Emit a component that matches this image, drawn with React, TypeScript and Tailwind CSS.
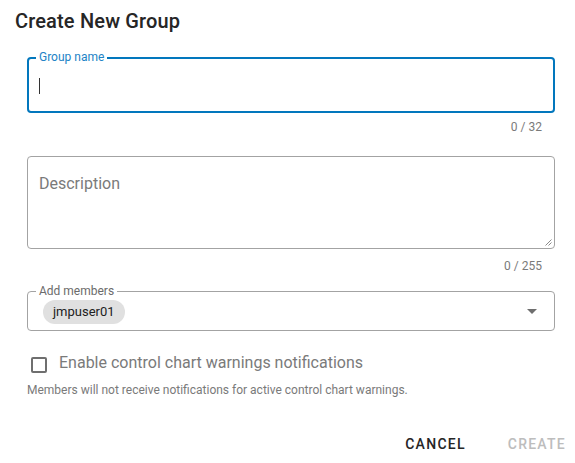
import { useState } from "react";

const medium = "font-['Roboto_Medium',Roboto,sans-serif] font-normal";

// Outlined field label that sits on top of the border line
function NotchLabel({ text, active, className }: { text: string; active?: boolean; className: string }) {
  return (
    <span
      className={`absolute bg-white px-[3px] text-[12px] leading-[16px] ${
        active ? "text-[#2283c6]" : "text-[#6b6b6b]"
      } ${className}`}
    >
      {text}
    </span>
  );
}

function Counter({ value, max, className }: { value: number; max: number; className: string }) {
  return (
    <div className={`flex justify-end pr-[13px] text-[12px] leading-[16px] text-[#7a7a7a] ${className}`}>
      {value} / {max}
    </div>
  );
}

function ResizeGrip() {
  return (
    <svg className="absolute bottom-[2px] right-[2px]" width="8" height="8" viewBox="0 0 8 8">
      <path d="M7.5 1.5 L1.5 7.5 M7.5 4.5 L4.5 7.5" stroke="#8a8a8a" strokeWidth="1" fill="none" />
    </svg>
  );
}

export default function App() {
  const [name] = useState("");
  const [desc] = useState("");
  const [notify, setNotify] = useState(false);

  return (
    <div
      className="flex h-[463px] w-[575px] flex-col bg-white text-[#212121]"
      style={{ fontFamily: "Roboto, 'Noto Sans', sans-serif" }}
    >
      <h2 className={`pl-[15px] pt-[7px] text-[20px] leading-[28px] tracking-[0.15px] text-[#262626] ${medium}`}>
        Create New Group
      </h2>

      <div className="ml-[27px] mr-[20px] flex flex-col">
        {/* group name, focused */}
        <div className="relative mt-[22px] flex h-[56px] items-center rounded-[4px] border-2 border-[#0277bd] pl-[10px]">
          <NotchLabel text="Group name" active className="-top-[10px] left-[7px]" />
          <span className="mt-[1px] h-[16px] w-px bg-[#333]" />
          <span className="sr-only">{name}</span>
        </div>
        <Counter value={name.length} max={32} className="mt-[6px]" />

        {/* description */}
        <div className="relative mt-[21px] h-[93px] rounded-[4px] border border-[#a3a3a3] pl-[11px] pt-[15px]">
          <span className="text-[16px] leading-[24px] text-[#7a7a7a]">{desc || "Description"}</span>
          <ResizeGrip />
        </div>
        <Counter value={desc.length} max={255} className="mt-[9px]" />

        {/* members select */}
        <div className="relative mt-[17px] flex h-[40px] items-center justify-between rounded-[4px] border border-[#a3a3a3] pl-[15px] pr-[17px]">
          <NotchLabel text="Add members" className="-top-[9px] left-[8px]" />
          <span className="mt-[2px] flex h-[24px] items-center rounded-full bg-[#e0e0e0] px-[10px] text-[13px] text-[#212121]">
            jmpuser01
          </span>
          <svg width="10" height="5" viewBox="0 0 10 5" className="mt-[1px]">
            <path d="M0 0 L10 0 L5 5 Z" fill="#6e6e6e" />
          </svg>
        </div>
      </div>

      {/* notifications toggle */}
      <label className="ml-[31px] mt-[20px] flex cursor-pointer items-start gap-[12px]">
        <span
          onClick={() => setNotify(!notify)}
          className={`mt-[6px] h-[16px] w-[16px] rounded-[2px] border-2 ${
            notify ? "border-[#0277bd] bg-[#0277bd]" : "border-[#6f6f6f]"
          }`}
        />
        <span className="text-[16px] leading-[24px] text-[#7a7a7a]">Enable control chart warnings notifications</span>
      </label>
      <p className="ml-[27px] mt-[7px] text-[12px] leading-[16px] text-[#7a7a7a]">
        Members will not receive notifications for active control chart warnings.
      </p>

      <div className="mt-[28px] flex justify-end gap-[26px] pr-[1px]">
        <button className={`h-[36px] px-[8px] text-[14px] uppercase leading-[36px] tracking-[1.25px] text-[#262626] ${medium}`}>
          Cancel
        </button>
        <button disabled className={`h-[36px] px-[8px] text-[14px] uppercase leading-[36px] tracking-[1.25px] text-[#bdbdbd] ${medium}`}>
          Create
        </button>
      </div>
    </div>
  );
}
